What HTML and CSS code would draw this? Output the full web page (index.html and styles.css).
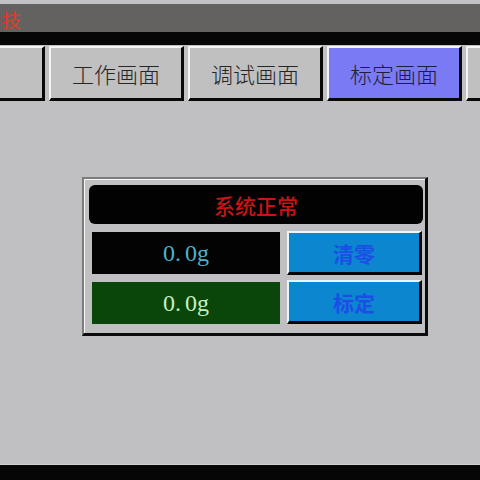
FILE: index.html
```html
<!DOCTYPE html>
<html lang="zh-CN">
<head>
<meta charset="utf-8">
<title>标定画面</title>
<link rel="stylesheet" href="styles.css">
</head>
<body>
<div class="screen">
  <div class="top-strip"></div>
  <div class="title-bar"><span class="title-text">技</span></div>
  <div class="black-bar"></div>
  <div class="tabs">
    <div class="tab tab-first"></div>
    <div class="tab">工作画面</div>
    <div class="tab">调试画面</div>
    <div class="tab tab-active">标定画面</div>
    <div class="tab"></div>
  </div>
  <div class="main">
    <div class="panel">
      <div class="status">系统正常</div>
      <div class="rows">
        <div class="displays">
          <div class="display display-black">0<span class="dot">.</span>0g</div>
          <div class="display display-green">0<span class="dot">.</span>0g</div>
        </div>
        <div class="actions">
          <div class="btn">清零</div>
          <div class="btn">标定</div>
        </div>
      </div>
    </div>
  </div>
  <div class="footer"></div>
</div>
</body>
</html>
```

FILE: styles.css
```css
* { box-sizing: border-box; }
html, body {
  margin: 0;
  padding: 0;
  width: 480px;
  height: 480px;
  overflow: hidden;
  background: #c0bfc1;
}
.screen {
  width: 480px;
  height: 480px;
  display: flex;
  flex-direction: column;
  font-family: "Noto Sans CJK SC", "Noto Sans", sans-serif;
}
.top-strip {
  height: 4px;
  background: #c2c1c3;
}
.title-bar {
  height: 28px;
  background: #646260;
  display: flex;
  align-items: center;
  padding-left: 2px;
  padding-top: 3px;
}
.title-text {
  color: #e23a26;
  font-size: 19px;
  line-height: 24px;
}
.black-bar {
  height: 13px;
  background: #060606;
}
.tabs {
  height: 56px;
  padding-top: 1px;
  display: flex;
  gap: 4px;
  overflow: hidden;
  background: #c0bfc1;
}
.tab {
  flex: 0 0 135px;
  height: 55px;
  background: #c0c0c0;
  border-top: 2px solid #f4f4f4;
  border-left: 2px solid #f4f4f4;
  border-right: 3px solid #080808;
  border-bottom: 3px solid #080808;
  display: flex;
  align-items: center;
  justify-content: center;
  color: #262626;
  font-size: 22px;
  font-weight: 300;
}
.tab-first {
  margin-left: -90px;
}
.tab-active {
  background: #7a7af4;
  color: #1e1e3c;
}
.main {
  flex: 1;
  padding-top: 76px;
  padding-left: 82px;
}
.panel {
  width: 346px;
  height: 159px;
  border-top: 2px solid #7c7c7c;
  border-left: 2px solid #7c7c7c;
  border-right: 3px solid #0c0c0c;
  border-bottom: 3px solid #0c0c0c;
  box-shadow: inset 1px 1px 0 #f6f6f6;
  padding: 6px 0 0 5px;
  background: #c0bfc1;
}
.status {
  width: 334px;
  height: 39px;
  background: #020202;
  border-radius: 6px;
  display: flex;
  align-items: center;
  justify-content: center;
  color: #c81414;
  font-size: 21px;
  font-weight: 500;
}
.rows {
  display: flex;
  gap: 7px;
  margin-top: 7px;
  padding-left: 3px;
}
.displays {
  display: flex;
  flex-direction: column;
  gap: 8px;
  margin-top: 1px;
}
.display {
  width: 188px;
  height: 42px;
  display: flex;
  align-items: center;
  justify-content: center;
  font-family: "Liberation Serif", serif;
  font-size: 24px;
}
.dot { margin-right: 4px; }
.display-black {
  background: #030303;
  color: #4fb2cc;
}
.display-green {
  background: #0a460a;
  color: #c6f0c2;
}
.actions {
  display: flex;
  flex-direction: column;
  gap: 5px;
}
.btn {
  width: 135px;
  height: 44px;
  background: #0c87cf;
  border-top: 2px solid #eaf6ff;
  border-left: 2px solid #eaf6ff;
  border-right: 3px solid #050505;
  border-bottom: 3px solid #050505;
  display: flex;
  align-items: center;
  justify-content: center;
  color: #1c4ee6;
  font-size: 21px;
  font-weight: 700;
}
.footer {
  height: 16px;
  background: #060606;
  border-top: 1px solid #d0d0d0;
}
```
